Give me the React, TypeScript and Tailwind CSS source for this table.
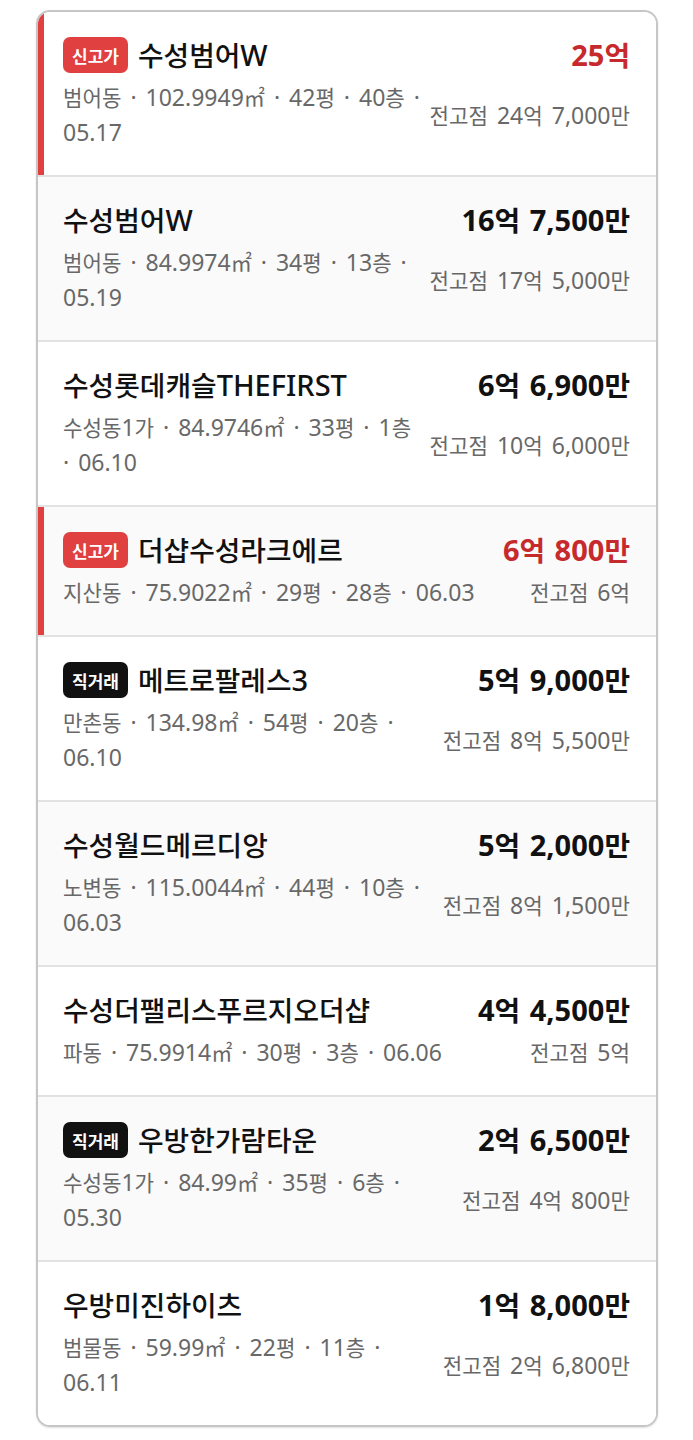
import React from "react";

type Row = {
  badge?: "신고가" | "직거래";
  name: string;
  price: string;
  info: string;
  prev: string;
};

const rows: Row[] = [
  { badge: "신고가", name: "수성범어W", price: "25억", info: "범어동 · 102.9949㎡ · 42평 · 40층 · 05.17", prev: "전고점 24억 7,000만" },
  { name: "수성범어W", price: "16억 7,500만", info: "범어동 · 84.9974㎡ · 34평 · 13층 · 05.19", prev: "전고점 17억 5,000만" },
  { name: "수성롯데캐슬THEFIRST", price: "6억 6,900만", info: "수성동1가 · 84.9746㎡ · 33평 · 1층 · 06.10", prev: "전고점 10억 6,000만" },
  { badge: "신고가", name: "더샵수성라크에르", price: "6억 800만", info: "지산동 · 75.9022㎡ · 29평 · 28층 · 06.03", prev: "전고점 6억" },
  { badge: "직거래", name: "메트로팔레스3", price: "5억 9,000만", info: "만촌동 · 134.98㎡ · 54평 · 20층 · 06.10", prev: "전고점 8억 5,500만" },
  { name: "수성월드메르디앙", price: "5억 2,000만", info: "노변동 · 115.0044㎡ · 44평 · 10층 · 06.03", prev: "전고점 8억 1,500만" },
  { name: "수성더팰리스푸르지오더샵", price: "4억 4,500만", info: "파동 · 75.9914㎡ · 30평 · 3층 · 06.06", prev: "전고점 5억" },
  { badge: "직거래", name: "우방한가람타운", price: "2억 6,500만", info: "수성동1가 · 84.99㎡ · 35평 · 6층 · 05.30", prev: "전고점 4억 800만" },
  { name: "우방미진하이츠", price: "1억 8,000만", info: "범물동 · 59.99㎡ · 22평 · 11층 · 06.11", prev: "전고점 2억 6,800만" },
];

const HANGUL = /([\uAC00-\uD7A3\u33A1]+)/;

// Hangul runs are set a little smaller than Latin/digits, as in the reference font.
function Mixed({ text, small }: { text: string; small: boolean }) {
  const parts = text.split(HANGUL);
  return (
    <>
      {parts.map((p, i) =>
        i % 2 === 1 ? (
          <span key={i} className={small ? "text-[0.92em]" : "text-[0.96em]"}>
            {p}
          </span>
        ) : (
          <React.Fragment key={i}>{p}</React.Fragment>
        )
      )}
    </>
  );
}

export default function App() {
  return (
    <div
      className="min-h-[1440px] bg-white pt-[10px]"
      style={{ fontFamily: '"Noto Sans", "Noto Sans CJK KR", sans-serif' }}
    >
      <div className="ml-[36px] w-[622px] overflow-hidden rounded-[14px] border-2 border-[#c6c6c6] shadow-[0_1px_2px_rgba(0,0,0,0.12)]">
        {rows.map((r, i) => {
          const high = r.badge === "신고가";
          const last = i === rows.length - 1;
          return (
            <div
              key={i}
              className={[
                "pl-[25px] pr-[26px] pt-[25px] pb-[25px]",
                i % 2 === 1 ? "bg-[#fafafa]" : "bg-white",
                last ? "" : "border-b-2 border-[#e2e2e2]",
                high ? "shadow-[inset_6px_0_0_#e0403f]" : "",
              ].join(" ")}
            >
              <div className="flex h-[36px] items-center justify-between gap-3">
                <div className="flex min-w-0 items-center gap-[10px]">
                  {r.badge && (
                    <span
                      className={[
                        "flex h-[36px] shrink-0 items-center rounded-[7px] px-[9px] text-[17px] font-bold leading-none text-white",
                        high ? "bg-[#e0403f]" : "bg-[#111111]",
                      ].join(" ")}
                      style={{ fontFamily: '"Noto Sans CJK KR", sans-serif' }}
                    >
                      {r.badge}
                    </span>
                  )}
                  <span className="whitespace-nowrap text-[29px] font-medium leading-[36px] text-[#111111]">
                    <Mixed text={r.name} small={false} />
                  </span>
                </div>
                <span
                  className={[
                    "shrink-0 whitespace-nowrap text-[29px] font-bold leading-[36px] [word-spacing:2px]",
                    high ? "text-[#c62a2d]" : "text-[#111111]",
                  ].join(" ")}
                >
                  <Mixed text={r.price} small={false} />
                </span>
              </div>
              <div className="mt-[7px] flex items-center justify-between gap-[8px]">
                <p className="min-w-0 flex-1 break-keep text-[23px] leading-[35px] text-[#686868] [word-spacing:3px]">
                  <Mixed text={r.info} small />
                </p>
                <span className="shrink-0 whitespace-nowrap text-[23px] leading-[35px] text-[#686868] [word-spacing:3px]">
                  <Mixed text={r.prev} small />
                </span>
              </div>
            </div>
          );
        })}
      </div>
    </div>
  );
}
